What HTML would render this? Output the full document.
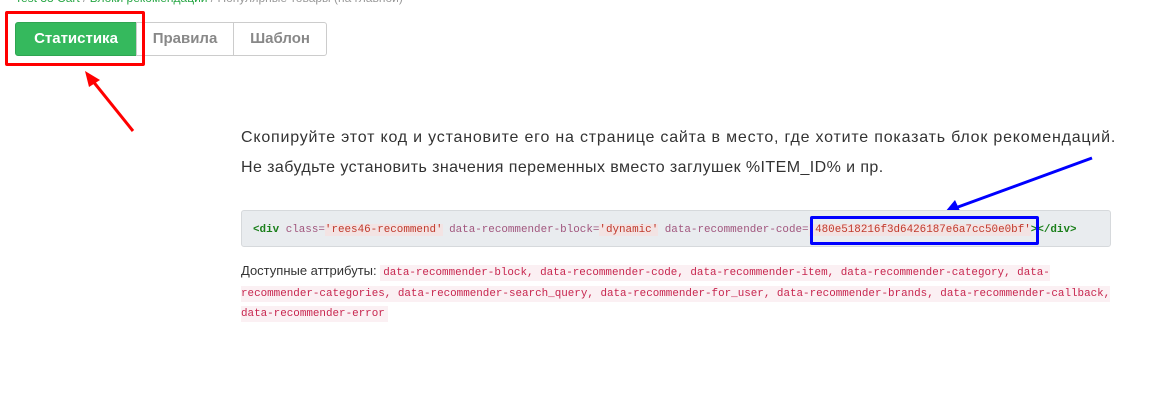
<!DOCTYPE html>
<html><head><meta charset="utf-8"><style>
body{margin:0;width:1157px;height:410px;background:#fff;position:relative;overflow:hidden;font-family:"Liberation Sans","DejaVu Sans",sans-serif;color:#333}
.crumb{position:absolute;left:15px;top:-9px;font-size:12px;color:#999;white-space:nowrap}
.crumb b{color:#28a745;font-weight:normal}
.btns{position:absolute;left:15px;top:22px;height:34px;display:flex}
.btn{height:32px;line-height:32px;border:1px solid #ccc;font-weight:bold;font-size:15px;color:#888;text-align:center;margin-left:-1px;background:#fff}
.b1{width:120px;background:#35b95d;border-color:#2fa552;color:#fff;border-radius:3px 0 0 3px;margin-left:0}
.b2{width:96px}.b3{width:92px;border-radius:0 3px 3px 0}
.red{position:absolute;left:5px;top:11px;width:134px;height:49px;border:3px solid #f00;border-radius:2px}
.p{position:absolute;left:241px;font-size:16px;color:#333;white-space:nowrap}
.code{position:absolute;left:241px;top:210px;width:870px;height:37px;background:#e9ecef;border:1px solid #d6d9dc;border-radius:3px;box-sizing:border-box}
.code pre{margin:0;position:absolute;left:11px;top:13px;font-family:"Liberation Mono",monospace;font-size:10.9px;color:#a1567e}
.g{color:#1a7f1a;font-weight:bold}.s{color:#c0392b;background:#f3e3e3}
.attr{position:absolute;left:241px;top:261px;width:870px;font-size:13px;line-height:20.5px}
.attr code{font-family:"Liberation Mono",monospace;font-size:10.9px;line-height:14px;color:#c7254e;background:#fbf0f3;padding:2px 3px}
.blue{position:absolute;left:810px;top:216px;width:223px;height:23px;border:3px solid #0000ff;border-radius:2px}
</style></head><body>
<div class="crumb"><b>Test 38 Cart</b> / <b>Блоки рекомендаций</b> / Популярные товары (на главной)</div>
<div class="btns"><div class="btn b1">Статистика</div><div class="btn b2">Правила</div><div class="btn b3">Шаблон</div></div>
<div class="red"></div>
<svg style="position:absolute;left:0;top:0" width="1157" height="410">
<line x1="133" y1="131" x2="92" y2="80" stroke="#f00" stroke-width="3"/>
<polygon points="85,71 100,80 89,87" fill="#f00"/>
<line x1="1092" y1="158" x2="958" y2="207" stroke="#0000ff" stroke-width="3"/>
<polygon points="945,212 955,200 961,213" fill="#0000ff"/>
</svg>
<div class="p" style="top:129px;letter-spacing:0.8px">Скопируйте этот код и установите его на странице сайта в место, где хотите показать блок рекомендаций.</div>
<div class="p" style="top:159px;letter-spacing:0.42px">Не забудьте установить значения переменных вместо заглушек %ITEM_ID% и пр.</div>
<div class="code"><pre><span class="g">&lt;div</span> class=<span class="s">'rees46-recommend'</span> data-recommender-block=<span class="s">'dynamic'</span> data-recommender-code=<span class="s">'480e518216f3d6426187e6a7cc50e0bf'</span><span class="g">&gt;&lt;/div&gt;</span></pre></div>
<div class="blue"></div>
<div class="attr">Доступные аттрибуты: <code>data-recommender-block, data-recommender-code, data-recommender-item, data-recommender-category, data-recommender-categories, data-recommender-search_query, data-recommender-for_user, data-recommender-brands, data-recommender-callback, data-recommender-error</code></div>
</body></html>
